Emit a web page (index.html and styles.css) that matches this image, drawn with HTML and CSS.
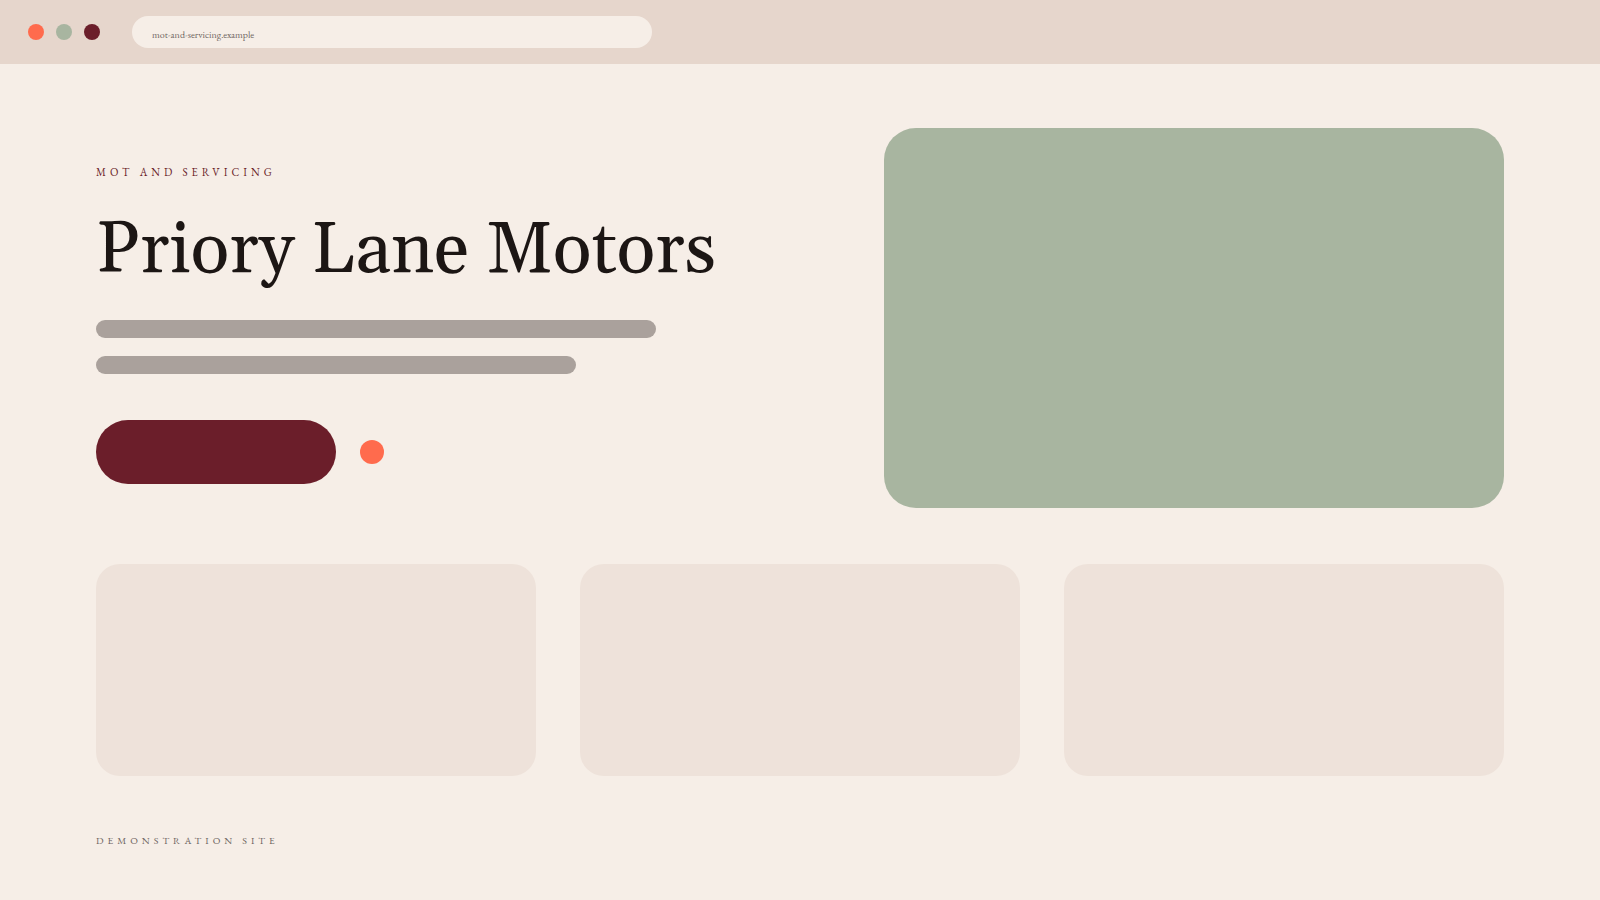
FILE: index.html
```html
<!DOCTYPE html>
<html lang="en">
<head>
  <meta charset="utf-8">
  <meta name="viewport" content="width=device-width, initial-scale=1">
  <title>Priory Lane Motors</title>
  <link rel="stylesheet" href="styles.css">
</head>
<body>
  <header class="browser-bar">
    <div class="window-dots" aria-hidden="true">
      <span class="dot dot-coral"></span>
      <span class="dot dot-sage"></span>
      <span class="dot dot-wine"></span>
    </div>
    <input class="address" type="text" value="mot-and-servicing.example" aria-label="Address" readonly>
  </header>

  <main class="page">
    <section class="hero">
      <div class="hero-copy">
        <p class="eyebrow">MOT AND SERVICING</p>
        <h1 class="title">Priory Lane Motors</h1>
        <div class="lines" aria-hidden="true">
          <span class="line line-long"></span>
          <span class="line line-short"></span>
        </div>
        <div class="actions">
          <button class="cta" type="button" aria-label="Book"></button>
          <span class="accent" aria-hidden="true"></span>
        </div>
      </div>
      <div class="hero-panel"></div>
    </section>

    <section class="cards">
      <article class="card"></article>
      <article class="card"></article>
      <article class="card"></article>
    </section>

    <footer class="footnote">DEMONSTRATION SITE</footer>
  </main>
</body>
</html>
```
FILE: styles.css
```css
:root {
  --cream: #f6eee7;
  --sand: #e6d6cc;
  --card: #eee2da;
  --coral: #ff6b4d;
  --sage: #a8b5a0;
  --wine: #6b1e2a;
  --ink: #1c1614;
  --muted: #6e6561;
  --line: #aaa19c;
}

* {
  box-sizing: border-box;
}

body {
  margin: 0;
  min-height: 100vh;
  background: var(--cream);
  color: var(--ink);
  font-family: "EB Garamond", "Liberation Serif", serif;
}

.browser-bar {
  display: flex;
  align-items: center;
  gap: 32px;
  padding: 16px 28px;
  background: var(--sand);
}

.window-dots {
  display: flex;
  gap: 12px;
}

.dot {
  width: 16px;
  height: 16px;
  border-radius: 50%;
}

.dot-coral {
  background: var(--coral);
}

.dot-sage {
  background: var(--sage);
}

.dot-wine {
  background: var(--wine);
}

.address {
  flex: 0 1 520px;
  min-width: 0;
  height: 32px;
  padding: 4px 20px 0;
  border: 0;
  border-radius: 16px;
  background: var(--cream);
  color: var(--muted);
  font-family: inherit;
  font-size: 10px;
}

.page {
  padding: 64px 6% 48px;
}

.hero {
  display: grid;
  grid-template-columns: 197fr 155fr;
}

.hero-copy {
  padding-top: 36px;
}

.eyebrow {
  margin: 0 0 27px;
  color: var(--wine);
  font-size: 11px;
  line-height: 16px;
  letter-spacing: 4px;
}

.title {
  margin: 0 0 25px;
  font-family: Georgia, Gelasio, "Liberation Serif", serif;
  font-size: 72px;
  font-weight: 400;
  line-height: 88px;
}

.lines {
  display: grid;
  gap: 18px;
  margin-bottom: 46px;
}

.line {
  max-width: 100%;
  height: 18px;
  border-radius: 9px;
  background: var(--line);
}

.line-long {
  width: 560px;
}

.line-short {
  width: 480px;
}

.actions {
  display: flex;
  align-items: center;
  gap: 24px;
}

.cta {
  width: 240px;
  height: 64px;
  padding: 0;
  border: 0;
  border-radius: 32px;
  background: var(--wine);
}

.accent {
  width: 24px;
  height: 24px;
  border-radius: 50%;
  background: var(--coral);
}

.hero-panel {
  min-height: 380px;
  border-radius: 32px;
  background: var(--sage);
}

.cards {
  display: grid;
  grid-template-columns: repeat(3, 1fr);
  gap: 44px;
  margin-top: 56px;
}

.card {
  min-height: 212px;
  border-radius: 24px;
  background: var(--card);
}

.footnote {
  margin-top: 57px;
  color: var(--muted);
  font-size: 10px;
  line-height: 16px;
  letter-spacing: 4px;
}
```
